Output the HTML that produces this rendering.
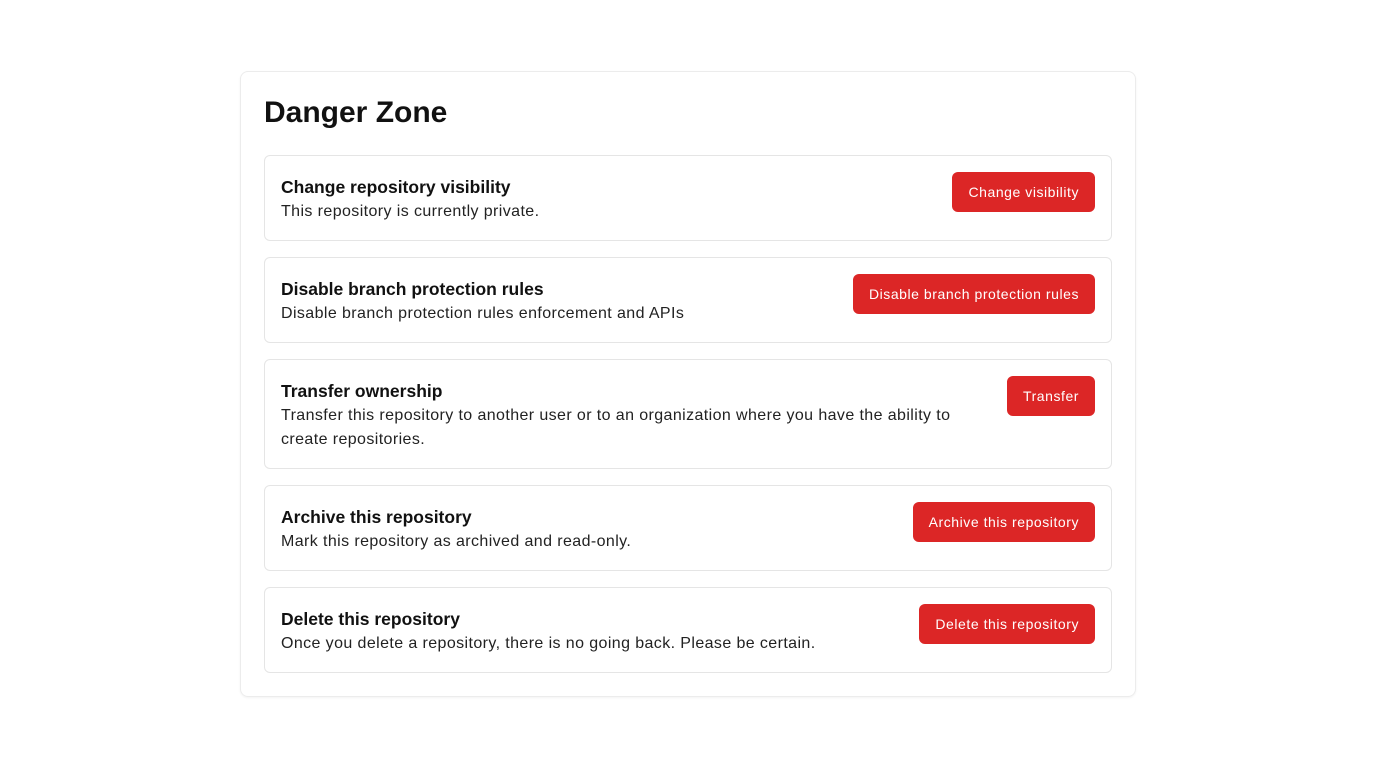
<!DOCTYPE html>
<html><head><meta charset="utf-8"><style>
*{box-sizing:border-box;margin:0;padding:0}
body{width:1376px;height:768px;background:#fff;font-family:"Liberation Sans",sans-serif;color:#111;}
.card{position:absolute;left:240px;top:71px;width:896px;height:626px;border:1px solid #ececec;border-radius:8px;padding:23px;box-shadow:0 1px 2px rgba(0,0,0,.05)}
h1{font-size:30px;line-height:36px;font-weight:700;margin-bottom:24px;letter-spacing:0px}
.row{border:1px solid #e5e5e5;border-radius:6px;padding:16px;display:flex;justify-content:space-between;align-items:flex-start;margin-bottom:16px}
.t{font-size:17.5px;line-height:28px;font-weight:700;padding-top:1px;margin-bottom:-1px}
.d{font-size:16px;line-height:24px;color:#222;max-width:690px;letter-spacing:0.4px}
.b{background:#dc2626;color:#fff;font-size:14px;font-weight:400;height:40px;line-height:40px;padding:0 16px;border-radius:6px;white-space:nowrap;flex-shrink:0;margin-left:24px;letter-spacing:0.55px}
</style></head><body>
<div class="card">
<h1>Danger Zone</h1>
<div class="row"><div><div class="t">Change repository visibility</div><div class="d">This repository is currently private.</div></div><div class="b">Change visibility</div></div>
<div class="row"><div><div class="t">Disable branch protection rules</div><div class="d">Disable branch protection rules enforcement and APIs</div></div><div class="b">Disable branch protection rules</div></div>
<div class="row"><div><div class="t">Transfer ownership</div><div class="d">Transfer this repository to another user or to an organization where you have the ability to create repositories.</div></div><div class="b">Transfer</div></div>
<div class="row"><div><div class="t">Archive this repository</div><div class="d">Mark this repository as archived and read-only.</div></div><div class="b">Archive this repository</div></div>
<div class="row"><div><div class="t">Delete this repository</div><div class="d">Once you delete a repository, there is no going back. Please be certain.</div></div><div class="b">Delete this repository</div></div>
</div>
</body></html>
